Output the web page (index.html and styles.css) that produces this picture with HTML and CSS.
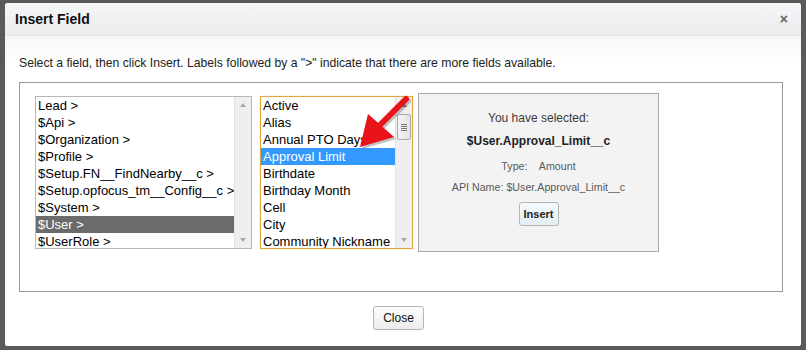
FILE: index.html
```html
<!DOCTYPE html>
<html>
<head>
<meta charset="utf-8">
<link rel="stylesheet" href="styles.css">
</head>
<body>
<div class="dialog">
  <div class="header">
    <span class="title">Insert Field</span>
    <span class="close-x">×</span>
  </div>
  <div class="body">
    <p class="hint">Select a field, then click Insert. Labels followed by a "&gt;" indicate that there are more fields available.</p>
    <div class="box">
      <div class="list list-left">
        <div class="items">
          <div class="item">Lead &gt;</div>
          <div class="item">$Api &gt;</div>
          <div class="item">$Organization &gt;</div>
          <div class="item">$Profile &gt;</div>
          <div class="item">$Setup.FN__FindNearby__c &gt;</div>
          <div class="item">$Setup.opfocus_tm__Config__c &gt;</div>
          <div class="item">$System &gt;</div>
          <div class="item sel-gray">$User &gt;</div>
          <div class="item">$UserRole &gt;</div>
        </div>
        <div class="scroll">
          <span class="arr up"></span>
          <span class="arr down"></span>
        </div>
      </div>
      <div class="list list-mid">
        <div class="items">
          <div class="item">Active</div>
          <div class="item">Alias</div>
          <div class="item">Annual PTO Days</div>
          <div class="item sel-blue">Approval Limit</div>
          <div class="item">Birthdate</div>
          <div class="item">Birthday Month</div>
          <div class="item">Cell</div>
          <div class="item">City</div>
          <div class="item">Community Nickname</div>
        </div>
        <div class="scroll">
          <span class="arr up dark"></span>
          <span class="thumb"><i></i><i></i><i></i><i></i></span>
          <span class="arr down"></span>
        </div>
      </div>
      <div class="panel">
        <div class="p-head">You have selected:</div>
        <div class="p-name">$User.Approval_Limit__c</div>
        <div class="p-type">Type:&nbsp;&nbsp;&nbsp; Amount</div>
        <div class="p-api">API Name: $User.Approval_Limit__c</div>
        <button class="btn btn-insert">Insert</button>
      </div>
      <svg class="arrow" width="70" height="70" viewBox="0 0 70 70">
        <g transform="translate(2,2)" fill="#7a7a7a" opacity="0.45">
          <line x1="52" y1="4" x2="26" y2="30" stroke="#7a7a7a" stroke-width="6" stroke-linecap="round"/>
          <polygon points="14,19 40,42 6,52"/>
        </g>
        <line x1="52" y1="4" x2="26" y2="30" stroke="#e8141a" stroke-width="6" stroke-linecap="round"/>
        <polygon points="14,19 40,42 6,52" fill="#e8141a"/>
      </svg>
    </div>
    <div class="footer">
      <button class="btn btn-close">Close</button>
    </div>
  </div>
</div>
</body>
</html>
```

FILE: styles.css
```css
html, body {
  margin: 0;
  padding: 0;
  background: #5a5a5a;
  font-family: "Liberation Sans", Arial, sans-serif;
}
body {
  padding: 3px 5px 4px 5px;
  height: 350px;
  box-sizing: border-box;
}
.dialog {
  height: 343px;
  background: #fff;
  border-radius: 3px;
  overflow: hidden;
}
.header {
  height: 32px;
  background: linear-gradient(#f5f6f7, #e9ebec);
  border-bottom: 1px solid #dfe2e4;
  display: flex;
  align-items: center;
  justify-content: space-between;
  padding: 0 13px 0 10px;
}
.title {
  font-weight: bold;
  font-size: 14px;
  color: #111;
}
.close-x {
  font-size: 14px;
  color: #666;
  font-weight: bold;
}
.body {
  background: linear-gradient(#f6f6f6, #fff 30px);
  padding: 1px 18px 0 14px;
  height: 309px;
}
.hint {
  margin: 19px 0 12px 0;
  font-size: 12.2px;
  color: #222;
  line-height: 14px;
  white-space: nowrap;
}
.box {
  position: relative;
  border: 1px solid #999;
  height: 210px;
  display: flex;
  align-items: flex-start;
  padding: 10px 0 0 15px;
  box-sizing: border-box;
}
.list {
  margin-top: 3px;
  height: 153px;
  display: flex;
  box-sizing: border-box;
  background: #fff;
}
.list-left {
  width: 217px;
  border: 1px solid #b8b8b8;
}
.list-mid {
  width: 153px;
  margin-left: 8px;
  border: 1px solid #e2a43e;
  box-shadow: 0 0 1px #f0c070;
}
.items {
  flex: 1;
  overflow: hidden;
  padding-top: 0;
}
.item {
  height: 17px;
  line-height: 17px;
  font-size: 13px;
  color: #000;
  padding-left: 2px;
  white-space: nowrap;
}
.sel-gray {
  background: #6b6b6b;
  color: #fff;
}
.sel-blue {
  background: #3399ff;
  color: #fff;
}
.scroll {
  width: 16px;
  background: #efefef;
  border-left: 1px solid #e2e2e2;
  position: relative;
}
.arr {
  position: absolute;
  left: 5px;
  width: 0;
  height: 0;
  border-left: 3px solid transparent;
  border-right: 3px solid transparent;
}
.arr.up {
  top: 6px;
  border-bottom: 4px solid #a8a8a8;
}
.arr.up.dark { border-bottom-color: #555; }
.arr.down {
  bottom: 6px;
  border-top: 4px solid #a8a8a8;
}
.thumb {
  position: absolute;
  top: 17px;
  left: 1px;
  width: 12px;
  height: 24px;
  background: linear-gradient(90deg, #f4f4f4, #e2e2e2);
  border: 1px solid #aaa;
  border-radius: 2px;
  display: flex;
  flex-direction: column;
  justify-content: center;
  align-items: center;
  gap: 1px;
}
.thumb i {
  display: block;
  width: 6px;
  height: 1px;
  background: #777;
}
.panel {
  margin-left: 5px;
  width: 241px;
  height: 159px;
  box-sizing: border-box;
  background: #f3f3f3;
  border: 1px solid #aaa;
  display: flex;
  flex-direction: column;
  align-items: center;
  padding-top: 17px;
  color: #333;
}
.p-head {
  font-size: 12px;
  line-height: 14px;
  color: #3a3a3a;
}
.p-name {
  font-size: 12px;
  font-weight: bold;
  color: #222;
  margin-top: 9px;
  line-height: 14px;
}
.p-type {
  font-size: 10.7px;
  color: #5a5a5a;
  margin-top: 12px;
  line-height: 12px;
}
.p-api {
  font-size: 10.7px;
  color: #5a5a5a;
  margin-top: 9px;
  line-height: 12px;
}
.btn {
  font-family: "Liberation Sans", Arial, sans-serif;
  font-weight: bold;
  font-size: 11px;
  color: #222;
  border: 1px solid #b5b5b5;
  border-radius: 3px;
  padding: 0;
}
.btn-insert {
  margin-top: 9px;
  width: 40px;
  height: 24px;
  background: linear-gradient(#f4f9fc, #e3eef5);
}
.footer {
  display: flex;
  justify-content: center;
  padding-top: 14px;
  padding-right: 5px;
}
.btn-close {
  width: 51px;
  height: 24px;
  background: linear-gradient(#fdfdfd, #ececec);
  font-size: 12px;
  font-weight: normal;
  color: #111;
}
.arrow {
  position: absolute;
  left: 334px;
  top: 12px;
}
```
